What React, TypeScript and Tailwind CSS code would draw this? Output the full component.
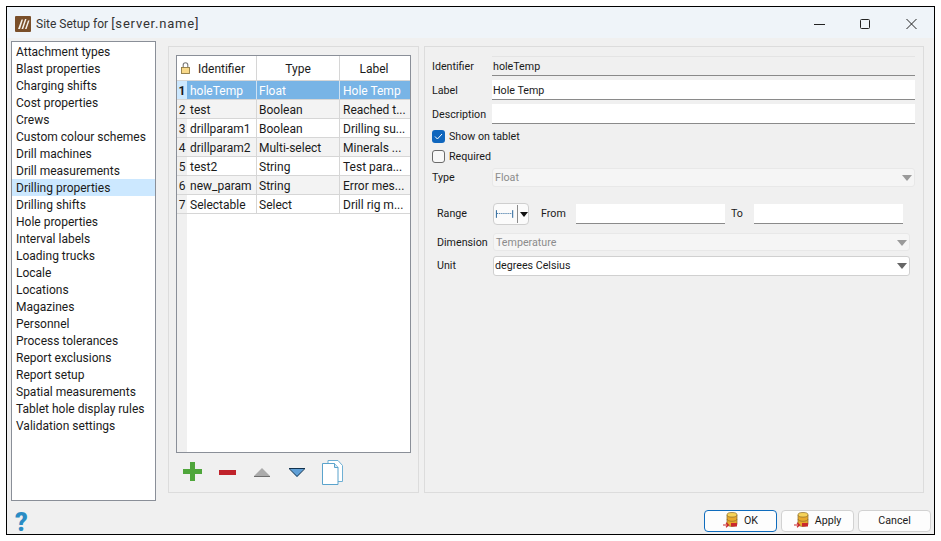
import { ReactNode } from "react";

const sections = [
  "Attachment types",
  "Blast properties",
  "Charging shifts",
  "Cost properties",
  "Crews",
  "Custom colour schemes",
  "Drill machines",
  "Drill measurements",
  "Drilling properties",
  "Drilling shifts",
  "Hole properties",
  "Interval labels",
  "Loading trucks",
  "Locale",
  "Locations",
  "Magazines",
  "Personnel",
  "Process tolerances",
  "Report exclusions",
  "Report setup",
  "Spatial measurements",
  "Tablet hole display rules",
  "Validation settings",
];

const params = [
  ["holeTemp", "Float", "Hole Temp"],
  ["test", "Boolean", "Reached t..."],
  ["drillparam1", "Boolean", "Drilling su..."],
  ["drillparam2", "Multi-select", "Minerals ..."],
  ["test2", "String", "Test para..."],
  ["new_param", "String", "Error mes..."],
  ["Selectable", "Select", "Drill rig m..."],
];

function DbIcon() {
  return (
    <svg width="17" height="18" viewBox="0 0 17 18" className="-mt-[2px]">
      <path d="M4 4v9c0 1.5 2.5 2.5 5 2.5s5-1 5-2.5V4z" fill="#e8a92c" stroke="#8a6a2a" strokeWidth="0.7" />
      <ellipse cx="9" cy="3.8" rx="5" ry="2.3" fill="#f6d35a" stroke="#8a6a2a" strokeWidth="0.7" />
      <path d="M4 8c0 1.4 2.5 2.3 5 2.3s5-.9 5-2.3" fill="none" stroke="#8a6a2a" strokeWidth="0.7" />
      <path d="M8 12h6v3.5H8z" fill="#c9282d" />
      <path d="M0 14h5M3 11.8 5.5 14 3 16.2" fill="none" stroke="#c9282d" strokeWidth="1.2" />
    </svg>
  );
}

function Chevron({ light }: { light?: boolean }) {
  return (
    <svg width="10" height="6" viewBox="0 0 10 6">
      <path d="M0 0h10L5 6z" fill={light ? "#9a9a9a" : "#666"} />
    </svg>
  );
}

function Row({ label, children, className }: { label: string; children: ReactNode; className?: string }) {
  return (
    <div className={"flex items-center " + (className || "")}>
      <span className="w-[60px] shrink-0 whitespace-nowrap pt-[2px]">{label}</span>
      {children}
    </div>
  );
}

function Check({ on, label }: { on?: boolean; label: string }) {
  return (
    <div className="flex items-center gap-[4px] h-[14px]">
      {on ? (
        <span className="w-[13px] h-[13px] rounded-[3px] bg-[#0f66bd] flex items-center justify-center">
          <svg width="9" height="7" viewBox="0 0 9 7">
            <path d="M1 3.5 3.4 6 8 1" fill="none" stroke="#fff" strokeWidth="1" />
          </svg>
        </span>
      ) : (
        <span className="w-[13px] h-[13px] rounded-[3px] border border-[#6b6b6b] bg-[#f8f8f8]" />
      )}
      <span className="pt-[2px]">{label}</span>
    </div>
  );
}

function DialogButton({ label, icon, primary }: { label: string; icon?: boolean; primary?: boolean }) {
  return (
    <button
      className={
        "w-[73px] h-[22px] rounded-[4px] bg-[#fdfdfd] flex items-center justify-center gap-[4px] border text-[10.7px] " +
        (primary ? "border-[#0f6cbd]" : "border-[#d2d2d2]")
      }
    >
      {icon && <DbIcon />}
      <span>{label}</span>
    </button>
  );
}

export default function App() {
  return (
    <div
      className="w-[941px] h-[541px] bg-white p-[6px] text-[12px] leading-[16px] text-[#1a1a1a] overflow-hidden"
      style={{ fontFamily: 'Roboto, "Noto Sans", sans-serif' }}
    >
      <div className="w-[929px] h-[529px] border border-black bg-[#f0f0f0] flex flex-col">
        {/* title bar */}
        <div className="h-[31px] bg-[#eff4f9] flex items-center shrink-0 pl-[8px]">
          <svg width="16" height="16" viewBox="0 0 16 16" className="mt-[3px]">
            <rect width="16" height="16" rx="1" fill="#7a4f2a" />
            <path d="M3 13 6.5 3.5H8L5 13zM6.5 13 10 3H11.5L8.2 13zM10 13l3-8.5H14.5L11.6 13z" fill="#f3f0ea" />
          </svg>
          <span className="ml-[5px] mt-[3px] text-[#333]">
            Site Setup for <span className="text-[13px] tracking-[0.8px]">[server.name]</span>
          </span>
          <div className="ml-auto flex items-center mt-[2px] mr-[1px]">
            <svg width="46" height="12" viewBox="0 0 46 12">
              <path d="M0 6.5h11" stroke="#222" strokeWidth="1" />
            </svg>
            <svg width="46" height="12" viewBox="0 0 46 12">
              <rect x="0.5" y="1.5" width="9" height="9" rx="1" fill="none" stroke="#222" strokeWidth="1" />
            </svg>
            <svg width="27" height="12" viewBox="0 0 27 12">
              <path d="M0.5 1 10.5 11M10.5 1 0.5 11" stroke="#222" strokeWidth="1" />
            </svg>
          </div>
        </div>

        {/* main */}
        <div className="flex flex-1 pl-[4px] pt-[3px]">
          <div className="w-[145px] h-[460px] shrink-0 bg-white border border-[#8a8f98] pt-[1px]">
            {sections.map((s) => (
              <div
                key={s}
                className={
                  "h-[17px] pl-[4px] flex items-center " + (s === "Drilling properties" ? "bg-[#cce8ff]" : "")
                }
              >
                {s}
              </div>
            ))}
          </div>

          {/* parameter table group */}
          <div className="w-[251px] h-[447px] ml-[12px] mt-[5px] shrink-0 border border-[#dcdcdc] pl-[7px] pt-[8px]">
            <div className="w-[235px] h-[398px] border border-[#8a8f98] bg-white flex flex-col">
              <div className="flex h-[25px] shrink-0 border-b border-[#d6d6d6] items-center">
                <div className="w-[10px] h-full" />
                <div className="w-[70px] h-full flex items-center border-r border-[#d6d6d6]">
                  <svg width="9" height="12" viewBox="0 0 9 12" className="-ml-[6px]">
                    <path d="M2.2 5.5V3a2.3 2.3 0 0 1 4.6 0v2.5" fill="none" stroke="#7a7a7a" strokeWidth="1.1" />
                    <rect x="0.5" y="5.5" width="8" height="6" fill="#f8d98a" stroke="#8f7a44" strokeWidth="0.9" />
                  </svg>
                  <span className="ml-[8px] pt-[2px]">Identifier</span>
                </div>
                <div className="w-[83px] h-full pt-[2px] flex items-center justify-center border-r border-[#d6d6d6]">Type</div>
                <div className="flex-1 text-center pr-[2px] pt-[2px]">Label</div>
              </div>
              <div className="flex-1 flex">
                <div className="w-[10px] bg-[#f0f0f0]">
                  {params.map((p, i) => (
                    <div
                      key={p[0]}
                      className={
                        "h-[19px] pt-[2px] flex items-center justify-center border-b border-[#d6d6d6] " +
                        (i === 0 ? "bg-[#cce8ff] font-bold" : "")
                      }
                    >
                      {i + 1}
                    </div>
                  ))}
                </div>
                <div className="flex-1">
                  {params.map((p, i) => (
                    <div
                      key={p[0]}
                      className={
                        "h-[19px] flex " +
                        (i === 0
                          ? "bg-[#78b4e6] text-white border-b border-[#d6d6d6]"
                          : i % 2 === 1
                            ? "bg-[#f3f3f3] border-b border-[#d6d6d6]"
                            : "bg-white border-b border-[#d6d6d6]")
                      }
                    >
                      <div className={"w-[70px] pl-[3px] pt-[2px] flex items-center border-r " + (i === 0 ? "border-[#cfe2f3]" : "border-[#d6d6d6]")}>
                        {p[0]}
                      </div>
                      <div className={"w-[83px] pl-[2px] pt-[2px] flex items-center border-r " + (i === 0 ? "border-[#cfe2f3]" : "border-[#d6d6d6]")}>
                        {p[1]}
                      </div>
                      <div className="flex-1 pl-[3px] pt-[2px] flex items-center whitespace-nowrap overflow-hidden">{p[2]}</div>
                    </div>
                  ))}
                </div>
              </div>
            </div>

            {/* toolbar */}
            <div className="flex items-center h-[38px] pl-[7px]">
              <svg width="19" height="19" viewBox="0 0 19 19" className="-mt-[2px]">
                <path d="M7 0h5v7h7v5h-7v7H7v-7H0V7h7z" fill="#4fa63b" />
              </svg>
              <svg width="17" height="5" viewBox="0 0 17 5" className="ml-[17px]">
                <rect width="17" height="5" fill="#c0222b" />
              </svg>
              <svg width="16" height="9" viewBox="0 0 16 9" className="ml-[18px]">
                <path d="M8 0 16 8H0z" fill="#ababab" />
                <path d="M0 8.5h16" stroke="#6d6d6d" />
              </svg>
              <svg width="16" height="9" viewBox="0 0 16 9" className="ml-[19px]">
                <path d="M0 0h16L8 9z" fill="#5f9fd6" />
                <path d="M0 .5h16L8 8.5z" fill="none" stroke="#10324f" />
              </svg>
              <svg width="21" height="25" viewBox="0 0 21 25" className="ml-[17px]">
                <path d="M6 .5h10l4.5 5v16H6z" fill="#fff" stroke="#6fb0d4" />
                <path d="M.5 3.5h12l3.5 4v17H.5z" fill="#fff" stroke="#5aa3cc" />
                <path d="M12.5 3.5v4H16" fill="#d5e8f4" stroke="#5aa3cc" />
              </svg>
            </div>
          </div>

          {/* details group */}
          <div className="w-[500px] h-[447px] ml-[5px] mt-[5px] shrink-0 border border-[#dcdcdc] pl-[7px] pt-[9px] text-[10.7px]">
            <Row label="Identifier" className="h-[20px]">
              <div className="w-[423px] h-[20px] bg-[#f0f0f0] border-t border-[#e4e4e4] border-b border-b-[#8a8a8a] pl-[1px] pt-[2px] flex items-center">
                holeTemp
              </div>
            </Row>
            <Row label="Label" className="h-[20px] mt-[4px]">
              <div className="w-[423px] h-[20px] bg-white border-b border-[#8a8a8a] pl-[1px] pt-[2px] flex items-center">Hole Temp</div>
            </Row>
            <Row label="Description" className="h-[20px] mt-[4px]">
              <div className="w-[423px] h-[20px] bg-white border-b border-[#8a8a8a]" />
            </Row>
            <div className="mt-[5px]">
              <Check on label="Show on tablet" />
            </div>
            <div className="mt-[6px]">
              <Check label="Required" />
            </div>
            <div className="flex items-center h-[19px] mt-[5px]">
              <span className="w-[60px] shrink-0">Type</span>
              <div className="w-[423px] h-[19px] bg-[#f5f5f5] border border-[#e8e8e8] rounded-[3px] px-[2px] flex items-center justify-between text-[#8c8c8c]">
                Float
                <Chevron light />
              </div>
            </div>
            <div className="flex items-center h-[22px] mt-[16px] pl-[5px]">
              <span className="w-[56px]">Range</span>
              <div className="w-[36px] h-[22px] bg-[#fbfbfb] border border-[#cfcfcf] rounded-[4px] flex items-center">
                <svg width="24" height="8" viewBox="0 0 24 8">
                  <path d="M2.5 0v8M19.5 0v8" stroke="#1f5f96" />
                  <path d="M3 3.5h16" stroke="#1f5f96" strokeDasharray="1 1" />
                </svg>
                <span className="h-[18px] border-l border-[#8a8a8a]" />
                <span className="ml-[2px] flex">
                  <svg width="8" height="5" viewBox="0 0 8 5">
                    <path d="M0 0h8L4 5z" fill="#111" />
                  </svg>
                </span>
              </div>
              <span className="ml-[12px] w-[35px]">From</span>
              <div className="w-[149px] h-[20px] bg-white border-b border-[#8a8a8a]" />
              <span className="ml-[6px] w-[23px]">To</span>
              <div className="w-[149px] h-[20px] bg-white border-b border-[#8a8a8a]" />
            </div>
            <div className="flex items-center h-[18px] mt-[8px] pl-[5px]">
              <span className="w-[56px] shrink-0 whitespace-nowrap pt-[2px]">Dimension</span>
              <div className="w-[417px] h-[18px] bg-[#f5f5f5] border border-[#e8e8e8] rounded-[3px] px-[2px] pt-[1px] flex items-center justify-between text-[#8c8c8c]">
                Temperature
                <Chevron light />
              </div>
            </div>
            <div className="flex items-center h-[20px] mt-[5px] pl-[5px]">
              <span className="w-[56px]">Unit</span>
              <div className="w-[417px] h-[20px] bg-white border border-[#d0d0d0] rounded-[3px] px-[1px] pr-[2px] flex items-center justify-between">
                degrees Celsius
                <Chevron />
              </div>
            </div>
          </div>
        </div>

        {/* bottom bar */}
        <div className="h-[33px] shrink-0 flex items-end pb-[2px] pr-[3px] gap-[4px]">
          <span className="mr-auto ml-[8px] -mb-[3px] text-[25px] leading-[24px] font-black text-[#2a8cc4]">?</span>
          <DialogButton label="OK" icon primary />
          <DialogButton label="Apply" icon />
          <DialogButton label="Cancel" />
        </div>
      </div>
    </div>
  );
}
